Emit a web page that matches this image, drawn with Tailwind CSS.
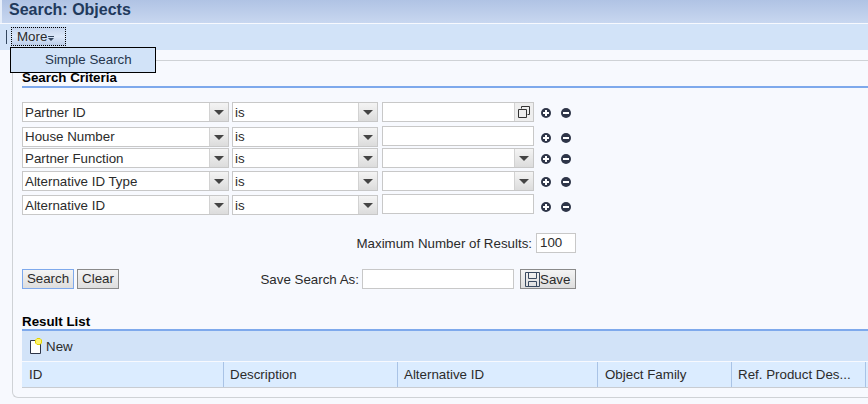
<!DOCTYPE html>
<html lang="en">
  <head>
    <meta charset="UTF-8" />
    <title>Search: Objects</title>
    <script src="https://cdn.jsdelivr.net/npm/@tailwindcss/browser@4"></script>
  </head>
  <body class="relative w-[868px] h-[404px] overflow-hidden bg-[#f7f9fe] font-['Liberation_Sans',Arial,sans-serif] text-[13.33px] leading-[15px] text-[#2b2b2b]">
    <!-- title bar -->
    <div class="h-[23px] pl-[7px] pt-[1px] bg-gradient-to-b from-[#b0c3e4] to-[#c8d7f0] border-l-2 border-[#e6eefa] text-[16px] leading-[18px] font-bold text-[#21395c]">Search: Objects</div>
    <!-- toolbar -->
    <div class="mt-[1px] h-[26px] flex items-start bg-[#d2e3f8] pl-[6px] pt-[3px]">
      <div class="w-px h-[14px] mt-[3px] mr-[4px] bg-[#33475f]"></div>
      <div class="flex items-center h-[19px] w-[55px] pl-[5px] border border-dotted border-black bg-gradient-to-b from-[#c6d6ee] via-[#dce8f9] to-[#bccee9]">
        More
        <svg class="ml-[1px] mt-[3px]" width="6" height="5" viewBox="0 0 6 5"><path d="M0 0h6v1H0zM0 2h6L3 5z" fill="#33475f"/></svg>
      </div>
    </div>

    <!-- menu -->
    <div class="absolute left-[10px] top-[47px] w-[146px] h-[26px] z-10 bg-[#d2e3f8] border border-black pl-[34px] pt-[4px] text-[#26364c]">Simple Search</div>

    <!-- panel -->
    <div class="ml-[12px] mt-[10px] h-[338px] border border-[#cfd2d6] border-r-0 rounded-tl-[6px] rounded-bl-[6px] pl-[9px] pt-[10px]">
      <div class="h-[15px] leading-[14px] font-bold text-black">Search Criteria</div>
      <div class="h-[2px] bg-[#7ea9ec]"></div>

      <!-- criteria rows -->
      <div class="mt-[14px] flex items-start h-[20px]">
        <div class="flex w-[207px] h-[20px] border border-[#c8c8c8] bg-white pl-[2px]">
          <span class="flex-1 leading-[19px]">Partner ID</span>
          <div class="w-[19px] flex items-center justify-center border-l border-[#d2d2d2] bg-gradient-to-b from-[#f4f4f4] to-[#dcdcdc]"><svg width="10" height="5" viewBox="0 0 10 5"><path d="M0 0h10L5 5z" fill="#444"/></svg></div>
        </div>
        <div class="ml-[3px] flex w-[146px] h-[20px] border border-[#c8c8c8] bg-white pl-[2px]">
          <span class="flex-1 leading-[19px]">is</span>
          <div class="w-[19px] flex items-center justify-center border-l border-[#d2d2d2] bg-gradient-to-b from-[#f4f4f4] to-[#dcdcdc]"><svg width="10" height="5" viewBox="0 0 10 5"><path d="M0 0h10L5 5z" fill="#444"/></svg></div>
        </div>
        <div class="ml-[4px] flex w-[152px] h-[20px] border border-[#c8c8c8] bg-white justify-end">
          <div class="w-[19px] flex items-center justify-center border-l border-[#d2d2d2] bg-[#eeeeee]"><svg width="12" height="12" viewBox="0 0 12 12" fill="none" stroke="#333"><path d="M3.500 2.500V.5h8v8h-2"/><path d="M.5 3.500h8v8h-8z"/></svg></div>
        </div>
        <div class="ml-[7px] mt-[6px] flex gap-[10px]">
          <svg width="10" height="10" viewBox="0 0 10 10"><circle cx="5" cy="5" r="5" fill="#2e3548"/><path d="M2 4h2V2h2v2h2v2H6v2H4V6H2z" fill="#fff"/></svg>
          <svg width="10" height="10" viewBox="0 0 10 10"><circle cx="5" cy="5" r="5" fill="#2e3548"/><path d="M2 4h6v2H2z" fill="#fff"/></svg>
        </div>
      </div>

      <div class="mt-[4px] flex items-start h-[21px]">
        <div class="mt-[1px] flex w-[207px] h-[20px] border border-[#c8c8c8] bg-white pl-[2px]">
          <span class="flex-1 leading-[17px]">House Number</span>
          <div class="w-[19px] flex items-center justify-center border-l border-[#d2d2d2] bg-gradient-to-b from-[#f4f4f4] to-[#dcdcdc]"><svg width="10" height="5" viewBox="0 0 10 5"><path d="M0 0h10L5 5z" fill="#444"/></svg></div>
        </div>
        <div class="mt-[1px] ml-[3px] flex w-[146px] h-[20px] border border-[#c8c8c8] bg-white pl-[2px]">
          <span class="flex-1 leading-[17px]">is</span>
          <div class="w-[19px] flex items-center justify-center border-l border-[#d2d2d2] bg-gradient-to-b from-[#f4f4f4] to-[#dcdcdc]"><svg width="10" height="5" viewBox="0 0 10 5"><path d="M0 0h10L5 5z" fill="#444"/></svg></div>
        </div>
        <div class="ml-[4px] w-[152px] h-[20px] border border-[#c8c8c8] bg-white"></div>
        <div class="ml-[7px] mt-[7px] flex gap-[10px]">
          <svg width="10" height="10" viewBox="0 0 10 10"><circle cx="5" cy="5" r="5" fill="#2e3548"/><path d="M2 4h2V2h2v2h2v2H6v2H4V6H2z" fill="#fff"/></svg>
          <svg width="10" height="10" viewBox="0 0 10 10"><circle cx="5" cy="5" r="5" fill="#2e3548"/><path d="M2 4h6v2H2z" fill="#fff"/></svg>
        </div>
      </div>

      <div class="mt-[1px] flex items-start h-[20px]">
        <div class="flex w-[207px] h-[20px] border border-[#c8c8c8] bg-white pl-[2px]">
          <span class="flex-1 leading-[19px]">Partner Function</span>
          <div class="w-[19px] flex items-center justify-center border-l border-[#d2d2d2] bg-gradient-to-b from-[#f4f4f4] to-[#dcdcdc]"><svg width="10" height="5" viewBox="0 0 10 5"><path d="M0 0h10L5 5z" fill="#444"/></svg></div>
        </div>
        <div class="ml-[3px] flex w-[146px] h-[20px] border border-[#c8c8c8] bg-white pl-[2px]">
          <span class="flex-1 leading-[19px]">is</span>
          <div class="w-[19px] flex items-center justify-center border-l border-[#d2d2d2] bg-gradient-to-b from-[#f4f4f4] to-[#dcdcdc]"><svg width="10" height="5" viewBox="0 0 10 5"><path d="M0 0h10L5 5z" fill="#444"/></svg></div>
        </div>
        <div class="ml-[4px] flex w-[152px] h-[20px] border border-[#c8c8c8] bg-white justify-end">
          <div class="w-[19px] flex items-center justify-center border-l border-[#d2d2d2] bg-gradient-to-b from-[#f4f4f4] to-[#dcdcdc]"><svg width="10" height="5" viewBox="0 0 10 5"><path d="M0 0h10L5 5z" fill="#444"/></svg></div>
        </div>
        <div class="ml-[7px] mt-[6px] flex gap-[10px]">
          <svg width="10" height="10" viewBox="0 0 10 10"><circle cx="5" cy="5" r="5" fill="#2e3548"/><path d="M2 4h2V2h2v2h2v2H6v2H4V6H2z" fill="#fff"/></svg>
          <svg width="10" height="10" viewBox="0 0 10 10"><circle cx="5" cy="5" r="5" fill="#2e3548"/><path d="M2 4h6v2H2z" fill="#fff"/></svg>
        </div>
      </div>

      <div class="mt-[3px] flex items-start h-[20px]">
        <div class="flex w-[207px] h-[20px] border border-[#c8c8c8] bg-white pl-[2px]">
          <span class="flex-1 leading-[19px]">Alternative ID Type</span>
          <div class="w-[19px] flex items-center justify-center border-l border-[#d2d2d2] bg-gradient-to-b from-[#f4f4f4] to-[#dcdcdc]"><svg width="10" height="5" viewBox="0 0 10 5"><path d="M0 0h10L5 5z" fill="#444"/></svg></div>
        </div>
        <div class="ml-[3px] flex w-[146px] h-[20px] border border-[#c8c8c8] bg-white pl-[2px]">
          <span class="flex-1 leading-[19px]">is</span>
          <div class="w-[19px] flex items-center justify-center border-l border-[#d2d2d2] bg-gradient-to-b from-[#f4f4f4] to-[#dcdcdc]"><svg width="10" height="5" viewBox="0 0 10 5"><path d="M0 0h10L5 5z" fill="#444"/></svg></div>
        </div>
        <div class="ml-[4px] flex w-[152px] h-[20px] border border-[#c8c8c8] bg-white justify-end">
          <div class="w-[19px] flex items-center justify-center border-l border-[#d2d2d2] bg-gradient-to-b from-[#f4f4f4] to-[#dcdcdc]"><svg width="10" height="5" viewBox="0 0 10 5"><path d="M0 0h10L5 5z" fill="#444"/></svg></div>
        </div>
        <div class="ml-[7px] mt-[6px] flex gap-[10px]">
          <svg width="10" height="10" viewBox="0 0 10 10"><circle cx="5" cy="5" r="5" fill="#2e3548"/><path d="M2 4h2V2h2v2h2v2H6v2H4V6H2z" fill="#fff"/></svg>
          <svg width="10" height="10" viewBox="0 0 10 10"><circle cx="5" cy="5" r="5" fill="#2e3548"/><path d="M2 4h6v2H2z" fill="#fff"/></svg>
        </div>
      </div>

      <div class="mt-[3px] flex items-start h-[21px]">
        <div class="mt-[1px] flex w-[207px] h-[20px] border border-[#c8c8c8] bg-white pl-[2px]">
          <span class="flex-1 leading-[19px]">Alternative ID</span>
          <div class="w-[19px] flex items-center justify-center border-l border-[#d2d2d2] bg-gradient-to-b from-[#f4f4f4] to-[#dcdcdc]"><svg width="10" height="5" viewBox="0 0 10 5"><path d="M0 0h10L5 5z" fill="#444"/></svg></div>
        </div>
        <div class="mt-[1px] ml-[3px] flex w-[146px] h-[20px] border border-[#c8c8c8] bg-white pl-[2px]">
          <span class="flex-1 leading-[19px]">is</span>
          <div class="w-[19px] flex items-center justify-center border-l border-[#d2d2d2] bg-gradient-to-b from-[#f4f4f4] to-[#dcdcdc]"><svg width="10" height="5" viewBox="0 0 10 5"><path d="M0 0h10L5 5z" fill="#444"/></svg></div>
        </div>
        <div class="ml-[4px] w-[152px] h-[20px] border border-[#c8c8c8] bg-white"></div>
        <div class="ml-[7px] mt-[8px] flex gap-[10px]">
          <svg width="10" height="10" viewBox="0 0 10 10"><circle cx="5" cy="5" r="5" fill="#2e3548"/><path d="M2 4h2V2h2v2h2v2H6v2H4V6H2z" fill="#fff"/></svg>
          <svg width="10" height="10" viewBox="0 0 10 10"><circle cx="5" cy="5" r="5" fill="#2e3548"/><path d="M2 4h6v2H2z" fill="#fff"/></svg>
        </div>
      </div>

      <!-- max results -->
      <div class="mt-[18px] w-[554px] flex items-center justify-end h-[20px]">
        <span>Maximum Number of Results:</span>
        <div class="ml-[4px] w-[40px] h-[20px] border border-[#c8c8c8] bg-white pl-[3px] leading-[18px]">100</div>
      </div>

      <!-- search / save -->
      <div class="mt-[16px] w-[554px] flex items-center h-[20px]">
        <button class="w-[52px] h-[20px] border border-[#7ea9ec] bg-gradient-to-b from-[#f4f4f4] to-[#dedede] leading-[16px]">Search</button>
        <button class="ml-[3px] w-[42px] h-[20px] border border-[#8a8a8a] bg-gradient-to-b from-[#f4f4f4] to-[#dedede] leading-[16px]">Clear</button>
        <span class="ml-auto">Save Search As:</span>
        <div class="ml-[3px] w-[152px] h-[20px] border border-[#c8c8c8] bg-white"></div>
        <button class="ml-[6px] w-[56px] h-[20px] flex items-center pl-[4px] border border-[#8a8a8a] bg-gradient-to-b from-[#f4f4f4] to-[#dedede]">
          <svg width="15" height="15" viewBox="0 0 15 15" fill="none" stroke="#3a4a60"><path d="M.5.500h14v14H.5z"/><path d="M3.500.5v6h8v-6M3.500 14.500v-5h8v5"/></svg>Save
        </button>
      </div>

      <!-- result list -->
      <div class="mt-[25px] h-[15px] pt-[1px] leading-[14px] font-bold text-black">Result List</div>
      <div class="h-[2px] bg-[#7ea9ec]"></div>
      <div class="h-[30px] flex items-center pl-[7px] bg-[#d2e3f8]">
        <svg width="15" height="16" viewBox="0 0 15 16"><path d="M1.500 2.500h7l3 3v10h-10z" fill="#fff" stroke="#2e3548"/><path d="M8 .5h3l1.500 1.500v3L11 6.500H8L6.500 5V2z" fill="#fff36a" stroke="#e4d400"/></svg>
        <span class="ml-[2px]">New</span>
      </div>
      <div class="mt-[1px] h-[26px] grid grid-cols-[202px_174px_200px_134px_134px_1fr] bg-[#dbecff] border-b border-[#c8ccd2] leading-[25px]">
        <div class="pl-[7px] border-r border-[#a9c3e6]">ID</div>
        <div class="pl-[6px] border-r border-[#a9c3e6]">Description</div>
        <div class="pl-[6px] border-r border-[#a9c3e6]">Alternative ID</div>
        <div class="pl-[7px] border-r border-[#a9c3e6]">Object Family</div>
        <div class="pl-[6px] border-r border-[#a9c3e6]">Ref. Product Des...</div>
        <div></div>
      </div>
    </div>
  </body>
</html>
